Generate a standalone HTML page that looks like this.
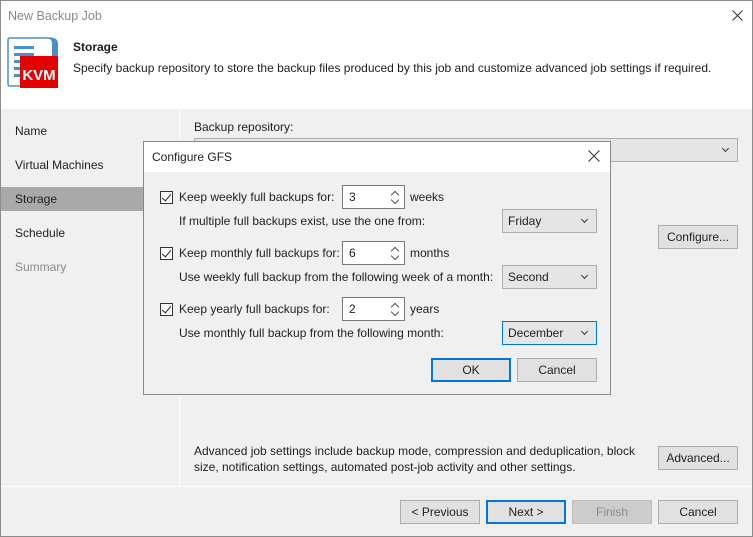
<!DOCTYPE html>
<html><head><style>
*{margin:0;padding:0;box-sizing:border-box}
body{width:753px;height:537px;position:relative;background:#f0f0f0;font-family:"Liberation Sans",sans-serif;font-size:12px;color:#1e1e1e;overflow:hidden}
.a{position:absolute;white-space:nowrap;line-height:14px}
.btn{position:absolute;background:#e1e1e1;border:1px solid #adadad;text-align:center;line-height:22px;height:24px}
.cb{position:absolute;width:13px;height:13px;border:1px solid #333;background:#fff}
.cb:after{content:"";position:absolute;left:3px;top:0px;width:4px;height:8px;border:solid #222;border-width:0 1.5px 1.5px 0;transform:rotate(40deg)}
.spin{position:absolute;width:63px;height:24px;background:#fff;border:1px solid #7a7a7a;padding-left:6px;line-height:22px}
.spin .u,.spin .d{position:absolute;right:6px;width:6px;height:6px;border:solid #555;border-width:1.2px 0 0 1.2px}
.spin .u{top:6px;transform:rotate(45deg)}
.spin .d{top:11px;transform:rotate(225deg)}
.combo{position:absolute;width:95px;height:24px;background:#e5e5e5;border:1px solid #adadad;padding-left:5px;line-height:22px}
.combo:after{content:"";position:absolute;right:9px;top:7px;width:4px;height:4px;border:solid #333;border-width:0 1.5px 1.5px 0;transform:rotate(45deg)}
</style></head><body>
<div style="position:absolute;left:0;top:0;width:753px;height:537px;border:1px solid #8c8c8c"></div>
<div style="position:absolute;left:1px;top:1px;width:751px;height:108px;background:#fff"></div>
<div class="a" style="left:8px;top:9px;color:#8a8a8a;font-size:12.5px">New Backup Job</div>
<svg style="position:absolute;left:732px;top:10px" width="11" height="11"><path d="M0.5 0.5L10.5 10.5M10.5 0.5L0.5 10.5" stroke="#333" stroke-width="1"/></svg>
<svg style="position:absolute;left:6px;top:36px" width="54" height="54" viewBox="0 0 54 54">
<path d="M2 4 Q2 2 4 2 L44 2 Q48 2 48 8 L48 22 M2 4 L2 48 Q2 50 4 50 L20 50" fill="none" stroke="#4a90c4" stroke-width="1.5"/>
<path d="M40 2 Q46 2 46 8 L46 22 L52 22 L52 8 Q52 2 46 2Z" fill="#4a90c4"/>
<rect x="8" y="10" width="20" height="3" fill="#4a90c4"/><rect x="8" y="17" width="20" height="3" fill="#4a90c4"/><rect x="8" y="24" width="16" height="3" fill="#4a90c4"/><rect x="8" y="31" width="6" height="3" fill="#4a90c4"/><rect x="8" y="38" width="6" height="3" fill="#4a90c4"/>
<rect x="14" y="20" width="38" height="32" fill="#e40000"/>
<text x="33" y="44" font-family="Liberation Sans" font-weight="bold" font-size="15" fill="#fff" text-anchor="middle">KVM</text>
</svg>
<div class="a" style="left:73px;top:40px;font-weight:bold">Storage</div>
<div class="a" style="left:73px;top:61px">Specify backup repository to store the backup files produced by this job and customize advanced job settings if required.</div>
<div style="position:absolute;left:179px;top:109px;width:1px;height:377px;background:#fff"></div>
<div style="position:absolute;left:1px;top:187px;width:178px;height:24px;background:#a9a9a9"></div>
<div class="a" style="left:15px;top:124px">Name</div>
<div class="a" style="left:15px;top:158px">Virtual Machines</div>
<div class="a" style="left:15px;top:192px">Storage</div>
<div class="a" style="left:15px;top:226px">Schedule</div>
<div class="a" style="left:15px;top:260px;color:#8a8a8a">Summary</div>
<div class="a" style="left:194px;top:120px">Backup repository:</div>
<div class="combo" style="left:194px;top:138px;width:544px;height:24px"></div>
<div class="btn" style="left:658px;top:225px;width:80px">Configure...</div>
<div class="a" style="left:194px;top:444px">Advanced job settings include backup mode, compression and deduplication, block</div>
<div class="a" style="left:194px;top:460px">size, notification settings, automated post-job activity and other settings.</div>
<div class="btn" style="left:658px;top:446px;width:80px">Advanced...</div>
<div style="position:absolute;left:1px;top:486px;width:751px;height:1px;background:#fff"></div>
<div class="btn" style="left:400px;top:500px;width:80px">&lt; Previous</div>
<div class="btn" style="left:486px;top:500px;width:80px;border:2px solid #0078d7;line-height:20px">Next &gt;</div>
<div class="btn" style="left:572px;top:500px;width:80px;background:#ccc;border-color:#bfbfbf;color:#8a8a8a">Finish</div>
<div class="btn" style="left:658px;top:500px;width:80px">Cancel</div>

<div style="position:absolute;left:143px;top:141px;width:468px;height:254px;border:1px solid #888;background:#f0f0f0">
<div style="position:absolute;left:0;top:0;width:466px;height:30px;background:#fff"></div>
</div>
<div class="a" style="left:152px;top:150px">Configure GFS</div>
<svg style="position:absolute;left:588px;top:150px" width="12" height="12"><path d="M0.5 0.5L11.5 11.5M11.5 0.5L0.5 11.5" stroke="#333" stroke-width="1"/></svg>

<div class="cb" style="left:160px;top:191px"></div>
<div class="a" style="left:179px;top:190px">Keep weekly full backups for:</div>
<div class="spin" style="left:342px;top:185px">3<i class="u"></i><i class="d"></i></div>
<div class="a" style="left:410px;top:190px">weeks</div>
<div class="a" style="left:179px;top:214px">If multiple full backups exist, use the one from:</div>
<div class="combo" style="left:502px;top:209px">Friday</div>

<div class="cb" style="left:160px;top:247px"></div>
<div class="a" style="left:179px;top:246px">Keep monthly full backups for:</div>
<div class="spin" style="left:342px;top:241px">6<i class="u"></i><i class="d"></i></div>
<div class="a" style="left:410px;top:246px">months</div>
<div class="a" style="left:179px;top:270px">Use weekly full backup from the following week of a month:</div>
<div class="combo" style="left:502px;top:265px">Second</div>

<div class="cb" style="left:160px;top:303px"></div>
<div class="a" style="left:179px;top:302px">Keep yearly full backups for:</div>
<div class="spin" style="left:342px;top:297px">2<i class="u"></i><i class="d"></i></div>
<div class="a" style="left:410px;top:302px">years</div>
<div class="a" style="left:179px;top:326px">Use monthly full backup from the following month:</div>
<div class="combo" style="left:502px;top:321px;border-color:#0078d7">December</div>

<div class="btn" style="left:431px;top:358px;width:80px;border:2px solid #0078d7;line-height:20px">OK</div>
<div class="btn" style="left:517px;top:358px;width:80px">Cancel</div>
</body></html>
